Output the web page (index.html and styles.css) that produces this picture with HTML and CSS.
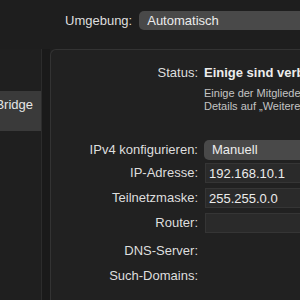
FILE: index.html
```html
<!DOCTYPE html>
<html lang="de">
<head>
    <meta charset="UTF-8">
    <title>Netzwerk</title>
    <link rel="stylesheet" href="styles.css">
</head>
<body>
    <div class="toolbar">
        <span class="toolbar-label">Umgebung:</span>
        <div class="popup wide">Automatisch</div>
    </div>

    <div class="content">
        <div class="sidebar">
            <div class="service selected"><span>Thunderbolt-Bridge</span></div>
        </div>
        <div class="gutter"></div>
        <div class="panel">
            <div class="row status-row">
                <div class="label">Status:</div>
                <div class="value strong">Einige sind verbunden</div>
            </div>
            <div class="row">
                <div class="label"></div>
                <div class="value note">Einige der Mitglieder der Bridge sind nicht verbunden.<br>Details auf „Weitere Optionen“</div>
            </div>
            <div class="row ipv4-row">
                <div class="label">IPv4 konfigurieren:</div>
                <div class="popup">Manuell</div>
            </div>
            <div class="row field-row">
                <div class="label">IP-Adresse:</div>
                <div class="field">192.168.10.1</div>
            </div>
            <div class="row field-row">
                <div class="label">Teilnetzmaske:</div>
                <div class="field">255.255.0.0</div>
            </div>
            <div class="row field-row">
                <div class="label">Router:</div>
                <div class="field"></div>
            </div>
            <div class="row plain-row dns-row">
                <div class="label">DNS-Server:</div>
            </div>
            <div class="row plain-row">
                <div class="label">Such-Domains:</div>
            </div>
        </div>
    </div>
</body>
</html>
```

FILE: styles.css
```css
body {
    margin: 0;
    width: 300px;
    height: 300px;
    overflow: hidden;
    background: #1e1e1e;
    color: #dedede;
    font-family: "Liberation Sans", Arial, sans-serif;
    font-size: 13px;
}
.toolbar {
    height: 49px;
    display: flex;
    align-items: flex-start;
    padding: 11px 0 0 65px;
    box-sizing: border-box;
    gap: 7px;
}
.toolbar-label {
    line-height: 19px;
}
.popup {
    height: 20px;
    line-height: 20px;
    background: #494949;
    border-radius: 5px;
    color: #ececec;
    padding: 0 8px;
    width: 200px;
    flex-shrink: 0;
}
.popup.wide {
    height: 19px;
    line-height: 19px;
    width: 300px;
}
.content {
    display: flex;
    height: 251px;
}
.sidebar {
    width: 41px;
    background: #1f1f1f;
    border-right: 1px solid #2c2c2c;
    padding-top: 42px;
}
.service {
    height: 40px;
    background: #3a3a3a;
    display: flex;
    justify-content: flex-end;
    overflow: hidden;
    white-space: nowrap;
    padding: 6px 8px 0 0;
    box-sizing: border-box;
    color: #e6e6e6;
}
.gutter {
    width: 8px;
    background: #1a1a1a;
}
.panel {
    flex: 1;
    background: #212121;
    border-top: 1px solid #333;
    border-left: 1px solid #333;
    border-top-left-radius: 6px;
    padding-top: 15px;
    overflow: hidden;
}
.row {
    display: flex;
    gap: 6px;
    white-space: nowrap;
}
.label {
    width: 147px;
    flex-shrink: 0;
    text-align: right;
    line-height: 16px;
}
.status-row .label,
.status-row .value {
    line-height: 16px;
}
.strong {
    font-weight: bold;
    color: #ececec;
}
.note {
    font-size: 11px;
    line-height: 13px;
    color: #c4c4c4;
    margin-top: 6px;
}
.ipv4-row {
    margin-top: 27px;
    align-items: center;
}
.field-row {
    align-items: center;
    margin-top: 3px;
}
.field-row + .field-row {
    margin-top: 5px;
}
.field {
    width: 200px;
    height: 20px;
    line-height: 20px;
    box-sizing: border-box;
    background: #2a2a2a;
    border: 1px solid #353535;
    padding: 0 3px;
    color: #ececec;
    flex-shrink: 0;
    margin-left: 1px;
}
.plain-row {
    margin-top: 9px;
}
.dns-row {
    margin-top: 10px;
}
```
